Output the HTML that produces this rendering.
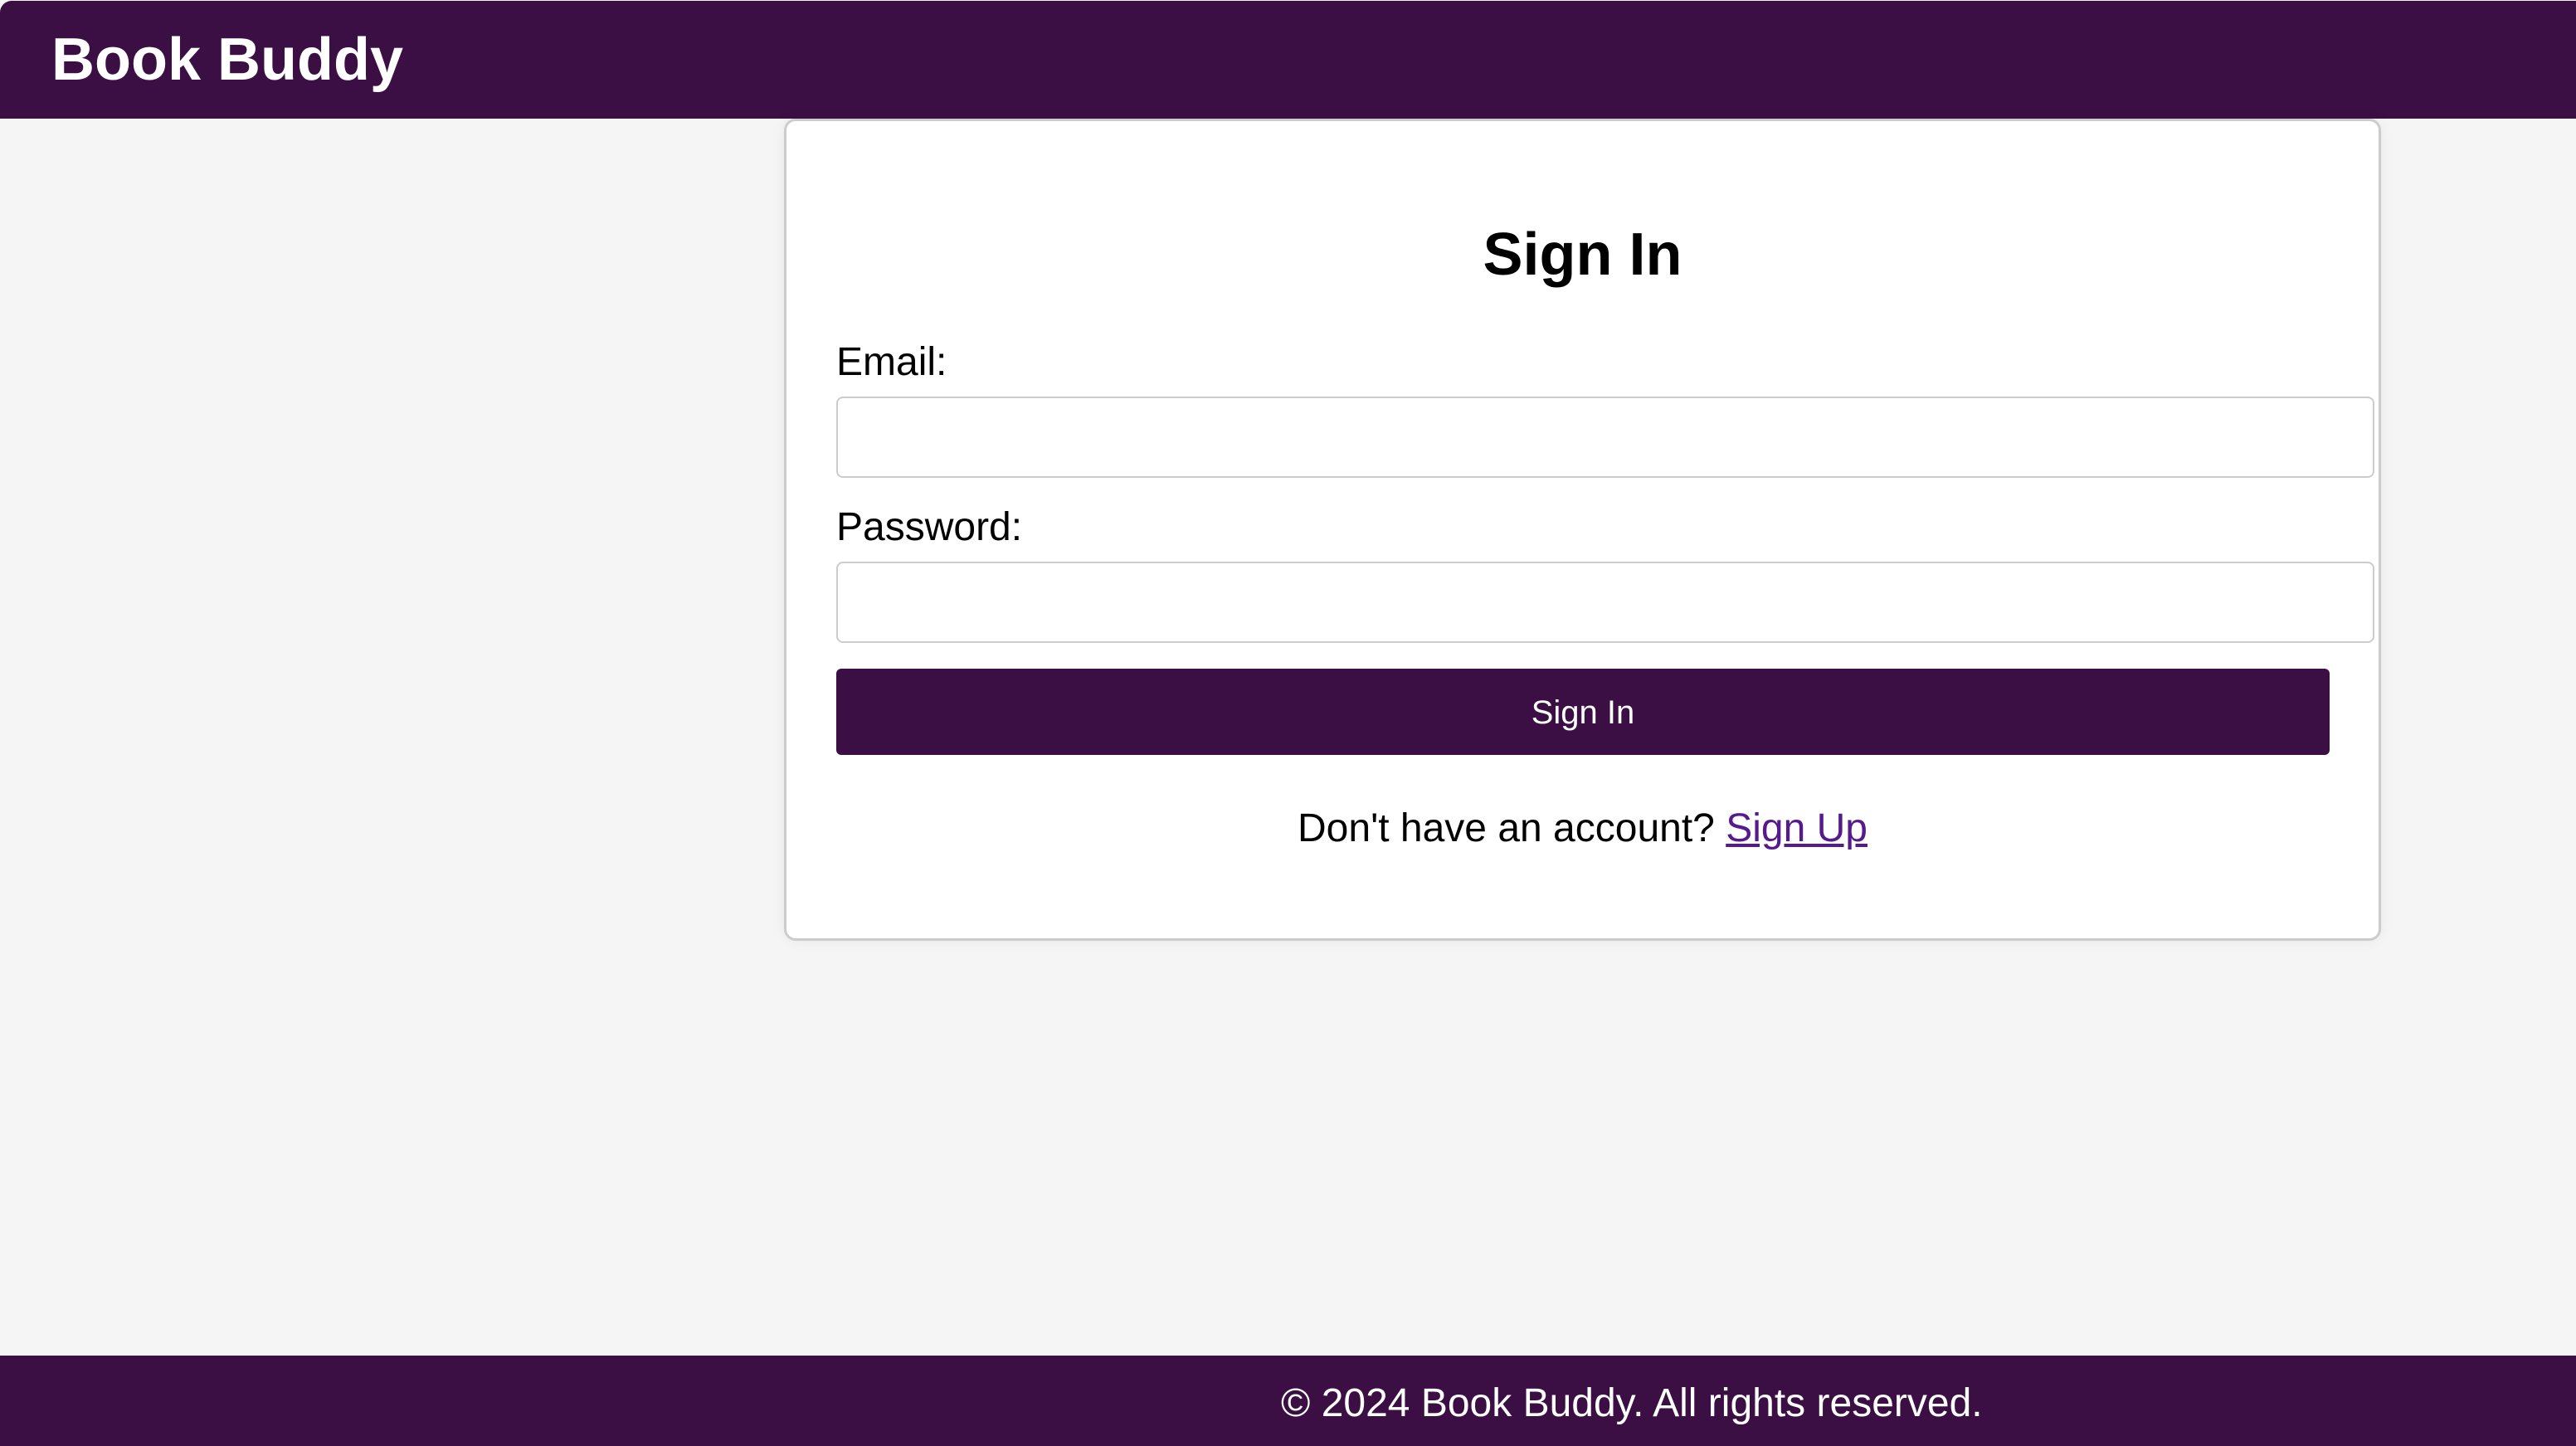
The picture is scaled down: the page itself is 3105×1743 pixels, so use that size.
<!DOCTYPE html>
<html><head><meta charset="utf-8"><style>
html,body{margin:0;padding:0}
body{width:3105px;height:1743px;background:#f5f5f5;position:relative;overflow:hidden;font-family:"Liberation Sans",Arial,sans-serif}
.hdr{position:absolute;left:0;top:1px;width:3105px;height:142px;background:#3c0f44;border-top-left-radius:14px}
.t{position:absolute;line-height:1;white-space:nowrap}
.card{position:absolute;left:945px;top:143px;width:1919px;height:985px;background:#fff;border:3px solid #ccc;border-radius:14px;box-shadow:0 0 16px rgba(0,0,0,0.06)}
.inp{position:absolute;left:1008px;width:1850px;height:94px;border:2px solid #ccc;border-radius:8px;background:#fff}
.btn{position:absolute;left:1008px;top:806px;width:1800px;height:104px;background:#3c0f44;border-radius:6px}
.ftr{position:absolute;left:0;top:1634px;width:3105px;height:109px;background:#3c0f44}
</style></head><body>
<div class="hdr"></div>
<div class="t" style="left:62px;top:36px;font-size:72px;font-weight:bold;color:#fff">Book Buddy</div>
<div class="card"></div>
<div class="t" style="left:945px;width:1925px;text-align:center;top:271px;font-size:72px;font-weight:bold;color:#000">Sign In</div>
<div class="t" style="left:1008px;top:413px;font-size:48px;color:#000">Email:</div>
<div class="inp" style="top:478px"></div>
<div class="t" style="left:1008px;top:612px;font-size:48px;color:#000">Password:</div>
<div class="inp" style="top:677px"></div>
<div class="btn"></div>
<div class="t" style="left:1008px;width:1800px;text-align:center;top:839px;font-size:40px;color:#fff">Sign In</div>
<div class="t" style="left:945px;width:1925px;text-align:center;top:975px;font-size:48px;color:#000">Don't have an account? <span style="color:#551a8b;text-decoration:underline">Sign Up</span></div>
<div class="ftr"></div>
<div class="t" style="left:1544px;top:1668px;font-size:48px;color:#fff">© 2024 Book Buddy. All rights reserved.</div>
</body></html>
